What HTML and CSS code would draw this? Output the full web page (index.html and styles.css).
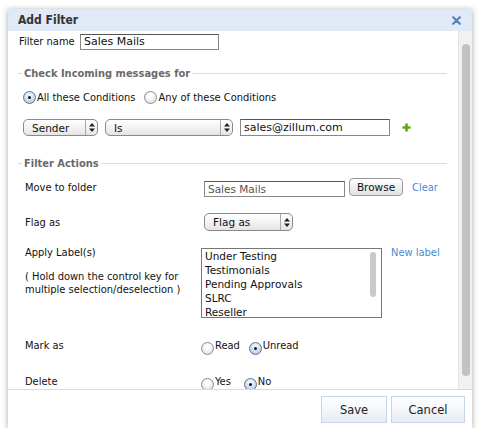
FILE: index.html
```html
<!DOCTYPE html>
<html>
<head>
<meta charset="utf-8">
<title>Add Filter</title>
<link rel="stylesheet" href="styles.css">
</head>
<body>
<div class="dialog">
  <div class="titlebar">
    <span class="title">Add Filter</span>
    <svg class="close" width="9" height="9" viewBox="0 0 9 9"><path d="M1.2 1.2 L7.8 7.8 M7.8 1.2 L1.2 7.8" stroke="#4d86bf" stroke-width="2.2" stroke-linecap="round"/></svg>
  </div>
  <div class="body">
    <div class="content">
      <div class="name-row">
        <span class="name-label">Filter name</span>
        <span class="input name-input">Sales Mails</span>
      </div>

      <div class="section-head"><span>Check Incoming messages for</span></div>

      <div class="match-row">
        <span class="radio checked"></span><span class="opt">All these Conditions</span>
        <span class="radio any"></span><span class="opt">Any of these Conditions</span>
      </div>

      <div class="cond-row">
        <span class="select sel-sender"><span class="sel-text">Sender</span><span class="sel-arrow"><svg width="6" height="9" viewBox="0 0 6 9"><path d="M3 0 L6 3.5 H0 Z M3 9 L6 5.5 H0 Z" fill="#222"/></svg></span></span>
        <span class="select sel-is"><span class="sel-text">Is</span><span class="sel-arrow"><svg width="6" height="9" viewBox="0 0 6 9"><path d="M3 0 L6 3.5 H0 Z M3 9 L6 5.5 H0 Z" fill="#222"/></svg></span></span>
        <span class="input email-input">sales@zillum.com</span>
        <svg class="plus" width="9" height="9" viewBox="0 0 9 9"><path d="M4.5 0.5 V8.5 M0.5 4.5 H8.5" stroke="#6aa121" stroke-width="2.6"/></svg>
      </div>

      <div class="section-head head2"><span>Filter Actions</span></div>

      <div class="act-row move-row">
        <span class="act-label">Move to folder</span>
        <span class="act-ctrl">
          <span class="input folder-input">Sales Mails</span>
          <span class="btn-browse">Browse</span>
          <span class="link clear">Clear</span>
        </span>
      </div>

      <div class="act-row flag-row">
        <span class="act-label">Flag as</span>
        <span class="act-ctrl">
          <span class="select sel-flag"><span class="sel-text">Flag as</span><span class="sel-arrow"><svg width="6" height="9" viewBox="0 0 6 9"><path d="M3 0 L6 3.5 H0 Z M3 9 L6 5.5 H0 Z" fill="#222"/></svg></span></span>
        </span>
      </div>

      <div class="act-row label-row">
        <div class="act-label">
          <div>Apply Label(s)</div>
          <div class="hint">( Hold down the control key for<br>multiple selection/deselection )</div>
        </div>
        <div class="act-ctrl">
          <div class="listbox">
            <div class="items">
              <div>Under Testing</div>
              <div>Testimonials</div>
              <div>Pending Approvals</div>
              <div>SLRC</div>
              <div>Reseller</div>
            </div>
            <div class="lb-scroll"><div class="lb-thumb"></div></div>
          </div>
          <span class="link newlabel">New label</span>
        </div>
      </div>

      <div class="act-row mark-row">
        <span class="act-label">Mark as</span>
        <span class="act-ctrl">
          <span class="radio"></span><span class="opt">Read</span>
          <span class="radio checked r2"></span><span class="opt">Unread</span>
        </span>
      </div>

      <div class="act-row del-row">
        <span class="act-label">Delete</span>
        <span class="act-ctrl">
          <span class="radio"></span><span class="opt">Yes</span>
          <span class="radio checked r3"></span><span class="opt">No</span>
        </span>
      </div>
    </div>
    <div class="scrollbar"><div class="thumb"></div></div>
  </div>
  <div class="footer">
    <span class="btn">Save</span>
    <span class="btn">Cancel</span>
  </div>
</div>
</body>
</html>
```

FILE: styles.css
```css
html, body {
  margin: 0;
  padding: 0;
  background: #ffffff;
}

body {
  font-family: "DejaVu Sans Condensed", "DejaVu Sans", sans-serif;
  font-stretch: condensed;
  font-size: 11px;
  color: #111;
}

.dialog {
  margin: 9px 8px 0 8px;
  width: 464px;
  height: 419px;
  background: #fff;
  box-shadow: 0 1px 6px rgba(0, 0, 0, 0.35);
  display: flex;
  flex-direction: column;
}

.titlebar {
  height: 22px;
  background: #dfeaf6;
  display: flex;
  align-items: center;
  justify-content: space-between;
  padding: 0 11px 0 10px;
  flex: none;
}

.title {
  font-weight: bold;
  font-size: 12px;
  color: #333;
}

.close {
  display: block;
}

.body {
  flex: none;
  height: 358px;
  display: flex;
  overflow: hidden;
}

.content {
  flex: 1;
  overflow: hidden;
  min-width: 0;
}

.scrollbar {
  width: 14px;
  flex: none;
  background: #f1f1f1;
  border-left: 1px solid #e2e2e2;
  padding-top: 13px;
  box-sizing: border-box;
}

.thumb {
  margin-left: 3px;
  width: 8px;
  height: 332px;
  border-radius: 4px;
  background: #c2c2c2;
}

/* generic controls */
.input {
  display: inline-block;
  box-sizing: border-box;
  border: 1px solid #888;
  border-top-color: #555;
  background: #fff;
  font-family: "DejaVu Sans", sans-serif;
  font-stretch: normal;
  font-size: 10.5px;
  line-height: 14px;
  padding: 0 3px;
  color: #111;
  white-space: nowrap;
  overflow: hidden;
}

.select {
  display: inline-flex;
  align-items: stretch;
  box-sizing: border-box;
  border: 1px solid #8a8a8a;
  border-radius: 5px;
  background: linear-gradient(#ffffff, #f3f3f3 50%, #e4e4e4);
  font-family: "DejaVu Sans", sans-serif;
  font-stretch: normal;
  font-size: 10.5px;
  color: #111;
}

.sel-text {
  flex: 1;
  padding-left: 8px;
  display: flex;
  align-items: center;
}

.sel-arrow {
  width: 11px;
  border-left: 1px solid #aaa;
  display: flex;
  align-items: center;
  justify-content: center;
}

.sel-arrow svg {
  display: block;
}

.radio {
  display: inline-block;
  box-sizing: border-box;
  width: 13px;
  height: 13px;
  border-radius: 50%;
  border: 1px solid #8d8d8d;
  background: radial-gradient(circle at 50% 35%, #ffffff 20%, #e3e3e3 75%, #cfcfcf);
  position: relative;
  flex: none;
}

.radio.checked {
  border-color: #5d7590;
  background: radial-gradient(circle at 50% 35%, #eef5fc 15%, #bcd2e8 70%, #97b2cf);
}

.radio.checked::after {
  content: "";
  position: absolute;
  left: 4px;
  top: 4px;
  width: 3px;
  height: 3px;
  border-radius: 50%;
  background: #111;
}

.opt {
  margin-left: 1px;
}

.link {
  color: #4a8ad4;
}

/* filter name */
.name-row {
  margin-top: 3px;
  height: 16px;
  display: flex;
  align-items: center;
  padding-left: 11px;
}

.name-label {
  width: 61px;
  flex: none;
  position: relative;
  top: -1px;
}

.name-input {
  width: 139px;
  height: 16px;
  font-size: 11px;
}

/* section headings */
.section-head {
  margin: 16px 11px 0 10px;
  height: 14px;
  display: flex;
  align-items: center;
  font-weight: bold;
  color: #6a6a6a;
}

.section-head::before {
  content: "";
  width: 4px;
  border-top: 1px solid #dcdcdc;
}

.section-head::after {
  content: "";
  flex: 1;
  border-top: 1px solid #dcdcdc;
}

.section-head span {
  padding: 0 2px;
}

.head2 {
  margin-top: 20px;
}

/* match row */
.match-row {
  margin-top: 10px;
  height: 14px;
  display: flex;
  align-items: center;
  padding-left: 15px;
}

.radio.any {
  margin-left: 9px;
}

/* condition row */
.cond-row {
  margin-top: 15px;
  height: 17px;
  display: flex;
  align-items: center;
  padding-left: 15px;
}

.sel-sender {
  width: 75px;
  height: 17px;
}

.sel-is {
  width: 128px;
  height: 17px;
  margin-left: 7px;
}

.email-input {
  margin-left: 7px;
  width: 150px;
  height: 17px;
  line-height: 15px;
  font-size: 11px;
}

.plus {
  margin-left: 12px;
  display: block;
}

/* action rows */
.act-row {
  display: flex;
  padding-left: 17px;
}

.act-label {
  width: 176px;
  flex: none;
}

.act-ctrl {
  display: flex;
  align-items: center;
}

.move-row {
  margin-top: 8px;
  height: 19px;
  align-items: center;
}

.folder-input {
  margin-left: 3px;
  width: 141px;
  height: 16px;
  color: #555;
  margin-top: 3px;
  font-size: 10.5px;
}

.btn-browse {
  margin-left: 4px;
  width: 54px;
  height: 18px;
  box-sizing: border-box;
  border: 1px solid #999;
  border-radius: 4px;
  background: linear-gradient(#ffffff, #f0f0f0 50%, #e2e2e2);
  font-family: "DejaVu Sans", sans-serif;
  font-stretch: normal;
  font-size: 10.5px;
  display: flex;
  align-items: center;
  justify-content: center;
  margin-top: -1px;
}

.clear {
  margin-left: 9px;
}

.flag-row {
  margin-top: 16px;
  height: 18px;
  align-items: center;
}

.sel-flag {
  margin-left: 3px;
  width: 89px;
  height: 18px;
}

.label-row {
  margin-top: 15px;
  line-height: 14px;
}

.label-row .act-ctrl {
  align-items: flex-start;
}

.hint {
  margin-top: 10px;
  line-height: 13px;
}

.listbox {
  margin-top: 2px;
  width: 181px;
  height: 70px;
  box-sizing: border-box;
  border: 1px solid #777;
  display: flex;
  font-family: "DejaVu Sans", sans-serif;
  font-stretch: normal;
  font-size: 10.5px;
  overflow: hidden;
}

.items {
  flex: 1;
  padding: 0 0 0 3px;
  line-height: 14px;
}

.lb-scroll {
  width: 14px;
  padding-top: 3px;
}

.lb-thumb {
  width: 6px;
  margin-left: 3px;
  height: 45px;
  border-radius: 3px;
  background: #c9c9c9;
}

.newlabel {
  margin-left: 9px;
  margin-top: 0px;
}

.mark-row {
  margin-top: 20px;
  height: 14px;
  align-items: center;
}

.mark-row .radio,
.del-row .radio {
  top: 3px;
}

.radio.r2 {
  margin-left: 9px;
}

.radio.r3 {
  margin-left: 13px;
}

.del-row {
  margin-top: 22px;
  height: 14px;
  align-items: center;
}

/* footer */
.footer {
  flex: 1;
  border-top: 1px solid #dadada;
  display: flex;
  justify-content: flex-end;
  align-items: flex-start;
  padding: 6px 7px 0 0;
  gap: 4px;
}

.btn {
  height: 27px;
  box-sizing: border-box;
  border: 1px solid #c6d6ea;
  background: linear-gradient(#ffffff, #f3f6fa 50%, #e6ecf4);
  display: flex;
  align-items: center;
  justify-content: center;
  font-family: "DejaVu Sans", sans-serif;
  font-stretch: normal;
  font-size: 11.5px;
  color: #222;
}

.btn:first-child {
  width: 66px;
}

.btn:last-child {
  width: 74px;
}
```
